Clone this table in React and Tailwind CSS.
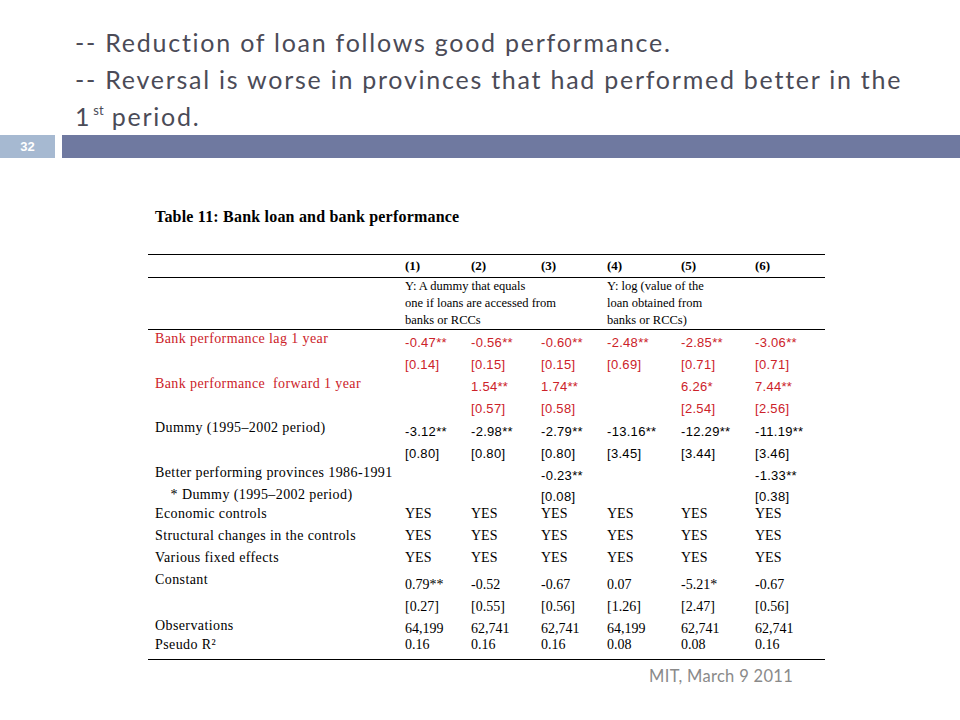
import React from "react";

const RED = "text-[#cc2229]";
const serif = "font-['Liberation_Serif','Times_New_Roman',serif]";
const sans = "font-['Liberation_Sans',Arial,sans-serif]";

const rows = [
  { label: "Bank performance lag 1 year", red: true, h: "h-[24px]", lt: "pt-[1px]", vt: "pt-[5px]", vf: sans,
    v: ["-0.47**", "-0.56**", "-0.60**", "-2.48**", "-2.85**", "-3.06**"] },
  { label: "", red: true, h: "h-[22px]", lt: "pt-[3px]", vt: "pt-[3px]", vf: sans,
    v: ["[0.14]", "[0.15]", "[0.15]", "[0.69]", "[0.71]", "[0.71]"] },
  { label: "Bank performance  forward 1 year", red: true, h: "h-[22px]", lt: "pt-[0px]", vt: "pt-[3px]", vf: sans,
    v: ["", "1.54**", "1.74**", "", "6.26*", "7.44**"] },
  { label: "", red: true, h: "h-[22px]", lt: "pt-[3px]", vt: "pt-[3px]", vf: sans,
    v: ["", "[0.57]", "[0.58]", "", "[2.54]", "[2.56]"] },
  { label: "Dummy (1995\u20132002 period)", h: "h-[23px]", lt: "pt-[0px]", vt: "pt-[4px]", vf: sans,
    v: ["-3.12**", "-2.98**", "-2.79**", "-13.16**", "-12.29**", "-11.19**"] },
  { label: "", h: "h-[22px]", lt: "pt-[3px]", vt: "pt-[3px]", vf: sans,
    v: ["[0.80]", "[0.80]", "[0.80]", "[3.45]", "[3.44]", "[3.46]"] },
  { label: "Better performing provinces 1986-1991", h: "h-[22px]", lt: "pt-[0px]", vt: "pt-[3px]", vf: sans,
    v: ["", "", "-0.23**", "", "", "-1.33**"] },
  { label: "    * Dummy (1995\u20132002 period)", h: "h-[19px]", lt: "pt-[0px]", vt: "pt-[2px]", vf: sans,
    v: ["", "", "[0.08]", "", "", "[0.38]"] },
  { label: "Economic controls", h: "h-[19px]", lt: "pt-[0px]", vt: "pt-[0px]", vf: serif,
    v: ["YES", "YES", "YES", "YES", "YES", "YES"] },
  { label: "Structural changes in the controls", h: "h-[22px]", lt: "pt-[3px]", vt: "pt-[3px]", vf: serif,
    v: ["YES", "YES", "YES", "YES", "YES", "YES"] },
  { label: "Various fixed effects", h: "h-[22px]", lt: "pt-[3px]", vt: "pt-[3px]", vf: serif,
    v: ["YES", "YES", "YES", "YES", "YES", "YES"] },
  { label: "Constant", h: "h-[27px]", lt: "pt-[3px]", vt: "pt-[8px]", vf: serif,
    v: ["0.79**", "-0.52", "-0.67", "0.07", "-5.21*", "-0.67"] },
  { label: "", h: "h-[22px]", lt: "pt-[3px]", vt: "pt-[3px]", vf: serif,
    v: ["[0.27]", "[0.55]", "[0.56]", "[1.26]", "[2.47]", "[0.56]"] },
  { label: "Observations", h: "h-[19px]", lt: "pt-[0px]", vt: "pt-[3px]", vf: serif,
    v: ["64,199", "62,741", "62,741", "64,199", "62,741", "62,741"] },
  { label: "Pseudo R\u00b2", h: "h-[22px]", lt: "pt-[0px]", vt: "pt-[0px]", vf: serif,
    v: ["0.16", "0.16", "0.16", "0.08", "0.08", "0.16"] },
];

const grid = "grid grid-cols-[257px_66px_70px_66px_74px_74px_70px]";

export default function App() {
  return (
    <div className="w-[960px] h-[720px] bg-white overflow-hidden">
      <div className="pt-[24px] pl-[75px] text-[25px] leading-[37px] tracking-[1.75px] text-[#4b4b57] font-['Lato','Open_Sans',sans-serif]">
        <div>-- Reduction of loan follows good performance.</div>
        <div>-- Reversal is worse in provinces that had performed better in the</div>
        <div>
          1<span className="text-[13px] align-top leading-[24px] ml-[2px] tracking-normal">st</span> period.
        </div>
      </div>
      <div className="flex h-[23px]">
        <div className="w-[55px] bg-[#a6b9d1] flex items-center justify-center text-white text-[13px] font-bold font-['Liberation_Sans',Arial,sans-serif]">
          32
        </div>
        <div className="w-[7px]" />
        <div className="flex-1 bg-[#6f79a0]" />
      </div>

      <div className={`mt-[50px] pl-[155px] text-[16px] leading-[18px] font-bold tracking-[0.2px] text-black ${serif}`}>
        Table 11: Bank loan and bank performance
      </div>

      <div className={`mt-[28px] ml-[148px] w-[677px] text-black ${serif}`}>
        <div className="border-t border-black" />
        <div className={`${grid} h-[22px] items-center font-bold text-[13px] leading-[16px]`}>
          <div />
          <div>(1)</div>
          <div>(2)</div>
          <div>(3)</div>
          <div>(4)</div>
          <div>(5)</div>
          <div>(6)</div>
        </div>
        <div className="border-t border-black" />
        <div className={`${grid} h-[51px] text-[12.5px] leading-[17px]`}>
          <div />
          <div className="col-span-3">
            Y: A dummy that equals
            <br />
            one if loans are accessed from
            <br />
            banks or RCCs
          </div>
          <div className="col-span-3">
            Y: log (value of the
            <br />
            loan obtained from
            <br />
            banks or RCCs)
          </div>
        </div>
        <div className="border-t border-black" />
        {rows.map((r, i) => (
          <div key={i} className={`${grid} ${r.h} ${r.red ? RED : "text-black"}`}>
            <div className={`${r.lt} pl-[7px] text-[14px] tracking-[0.4px] leading-[16px] whitespace-pre ${serif}`}>
              {r.label}
            </div>
            {r.v.map((val, j) => (
              <div
                key={j}
                className={`${r.vt} ${r.vf === sans ? "text-[13px] tracking-[0.3px]" : "text-[14px]"} leading-[16px] whitespace-nowrap ${r.vf}`}
              >
                {val}
              </div>
            ))}
          </div>
        ))}
        <div className="border-t border-black" />
      </div>

      <div className="mt-[7px] w-[793px] text-right text-[16.5px] leading-[18px] tracking-[0.3px] text-[#8a8a8a] font-['Lato','Open_Sans',sans-serif]">
        MIT, March 9 2011
      </div>
    </div>
  );
}
